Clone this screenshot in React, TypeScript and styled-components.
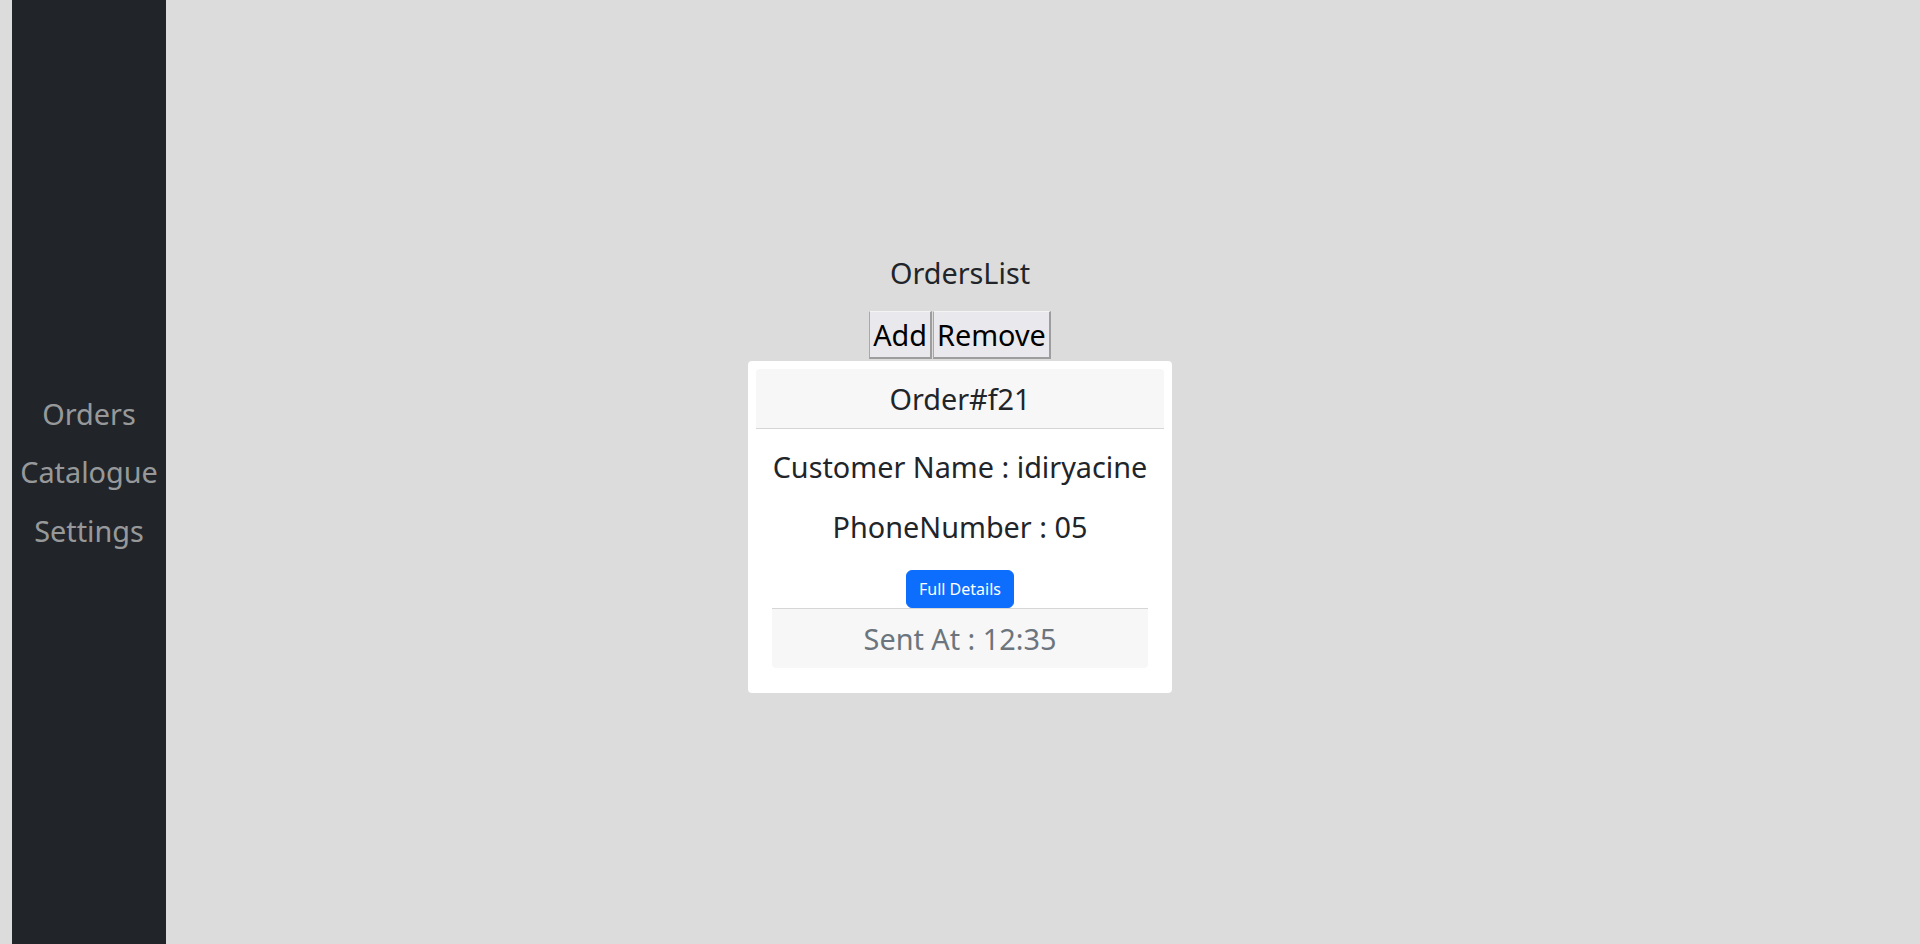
import React from "react";
import styled, { createGlobalStyle } from "styled-components";

const GlobalStyle = createGlobalStyle`
  html, body {
    margin: 0;
    padding: 0;
    background: #dcdcdc;
    font-family: "Noto Sans", "Open Sans", sans-serif;
    color: #212529;
  }
  * { box-sizing: border-box; }
`;

const Layout = styled.div`
  display: grid;
  grid-template-columns: 154px 1fr;
  padding-left: 12px;
  min-height: 100vh;
`;

const Sidebar = styled.nav`
  background: #212529;
  display: flex;
  flex-direction: column;
  align-items: center;
  justify-content: center;
  gap: 15px;
`;

const NavLink = styled.a`
  font-size: 28.8px;
  line-height: 1.5;
  color: rgba(255, 255, 255, 0.55);
  text-decoration: none;
  cursor: pointer;
`;

const Main = styled.main`
  display: flex;
  flex-direction: column;
  align-items: center;
  justify-content: center;
  padding-right: 166px;
`;

const Title = styled.div`
  font-size: 28.8px;
  line-height: 1.5;
  margin-bottom: 17px;
`;

const ButtonRow = styled.div`
  display: flex;
  gap: 1px;
  margin-bottom: 2px;
`;

const PlainButton = styled.button`
  font-family: "Noto Sans", sans-serif;
  font-size: 28.8px;
  line-height: 1.5;
  color: #000;
  background: #e9e9ed;
  padding: 0 3px;
  border-style: solid;
  border-width: 1px 2px 2px 1px;
  border-color: #f4f4f4 #9d9d9d #9d9d9d #a8a8a8;
  height: 48px;
`;

const Card = styled.div`
  width: 424px;
  background: #fff;
  border-radius: 4px;
  padding: 8px;
`;

const CardHeader = styled.div`
  background: #f7f7f7;
  border-bottom: 1px solid #d6d6d6;
  border-radius: 4px 4px 0 0;
  padding: 8px 16px;
  font-size: 28.8px;
  line-height: 1.5;
  text-align: center;
`;

const CardBody = styled.div`
  padding: 16px 16px 17px;
  display: flex;
  flex-direction: column;
  align-items: center;
  text-align: center;
`;

const Line = styled.p`
  margin: 0 0 16px;
  font-size: 28.8px;
  line-height: 1.5;
  white-space: nowrap;
`;

const PrimaryButton = styled.button`
  margin-top: 6px;
  font-family: "Noto Sans", sans-serif;
  font-size: 16px;
  line-height: 1.5;
  padding: 6px 12px;
  color: #fff;
  background: #0d6efd;
  border: 1px solid #0d6efd;
  border-radius: 6px;
  cursor: pointer;
`;

const CardFooter = styled.div`
  align-self: stretch;
  background: #f7f7f7;
  border-top: 1px solid #d6d6d6;
  border-radius: 0 0 4px 4px;
  padding: 8px 16px;
  font-size: 28.8px;
  line-height: 1.5;
  color: #6c757d;
  text-align: center;
`;

export default function App() {
  return (
    <>
      <GlobalStyle />
      <Layout>
        <Sidebar>
          <NavLink>Orders</NavLink>
          <NavLink>Catalogue</NavLink>
          <NavLink>Settings</NavLink>
        </Sidebar>
        <Main>
          <Title>OrdersList</Title>
          <ButtonRow>
            <PlainButton>Add</PlainButton>
            <PlainButton>Remove</PlainButton>
          </ButtonRow>
          <Card>
            <CardHeader>Order#f21</CardHeader>
            <CardBody>
              <Line>Customer Name : idiryacine</Line>
              <Line>PhoneNumber : 05</Line>
              <PrimaryButton>Full Details</PrimaryButton>
              <CardFooter>Sent At : 12:35</CardFooter>
            </CardBody>
          </Card>
        </Main>
      </Layout>
    </>
  );
}
